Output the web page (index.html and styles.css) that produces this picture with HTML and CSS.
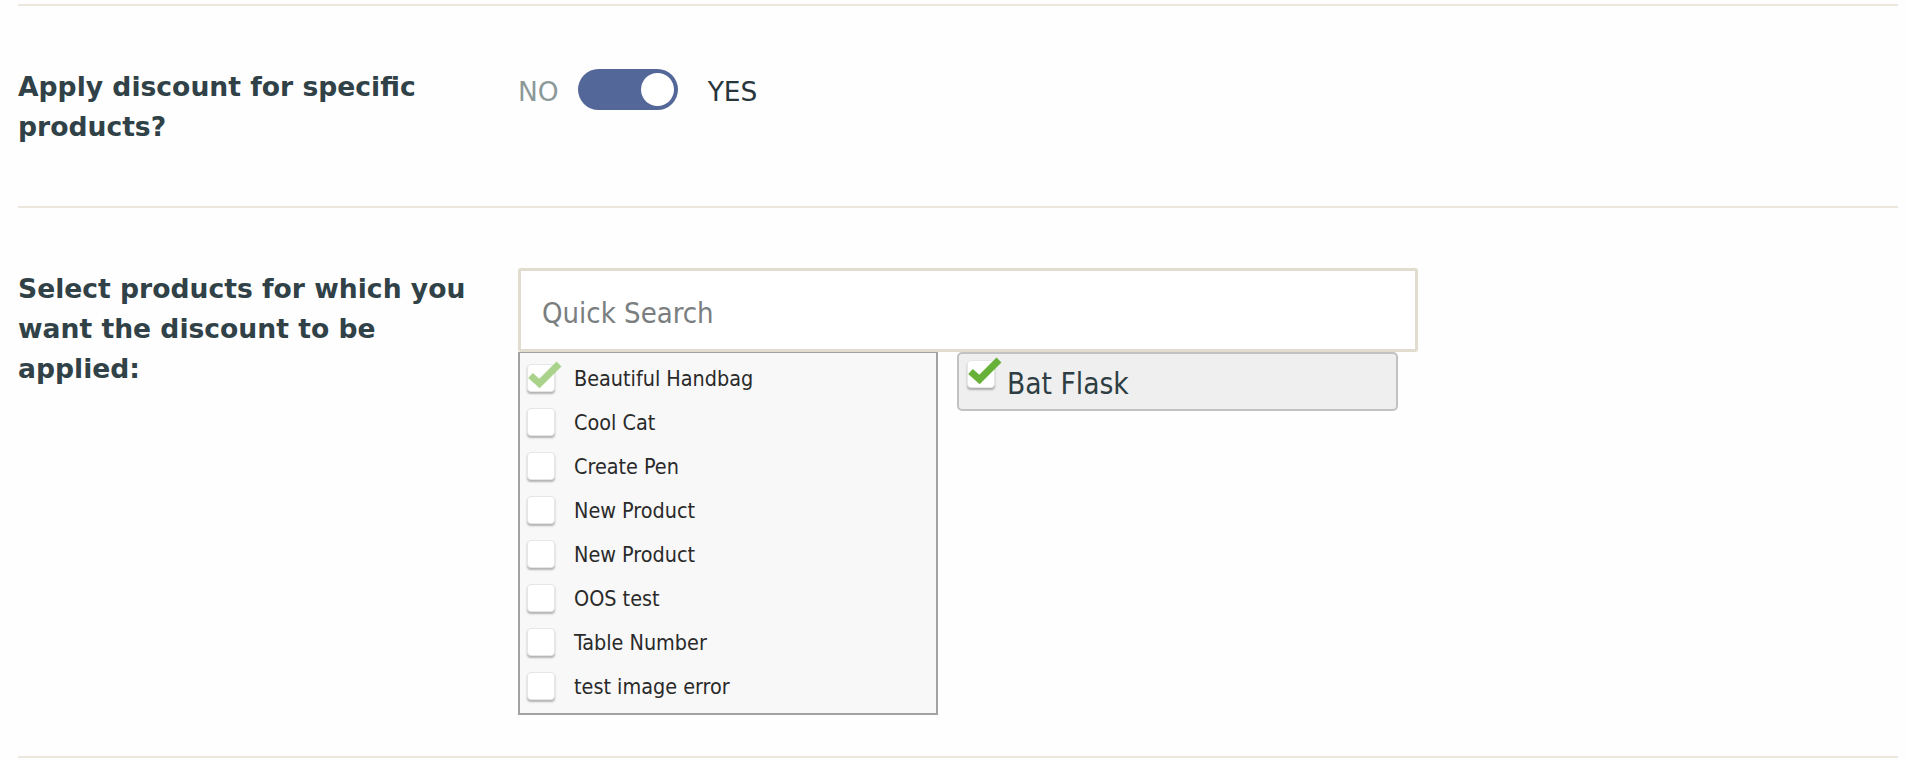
FILE: index.html
```html
<!DOCTYPE html>
<html lang="en">
<head>
<meta charset="utf-8">
<title>Discount products</title>
<link rel="stylesheet" href="styles.css">
</head>
<body>
<div class="form">
  <div class="row row-toggle">
    <div class="label">Apply discount for specific products?</div>
    <div class="control toggle-wrap">
      <span class="opt opt-off">NO</span>
      <span class="switch"><span class="knob"></span></span>
      <span class="opt opt-on">YES</span>
    </div>
  </div>
  <div class="row row-products">
    <div class="label label-products">Select products for which you want the discount to be applied:</div>
    <div class="control control-products">
      <input class="search" type="text" placeholder="Quick Search">
      <div class="picker">
        <ul class="list">
          <li class="item">
            <span class="cb"><svg class="check check-light" viewBox="0 0 34 28"><path d="M2.5 14.5 L11.5 22.5 L31 3"/></svg></span>
            <span class="name">Beautiful Handbag</span>
          </li>
          <li class="item"><span class="cb"></span><span class="name">Cool Cat</span></li>
          <li class="item"><span class="cb"></span><span class="name">Create Pen</span></li>
          <li class="item"><span class="cb"></span><span class="name">New Product</span></li>
          <li class="item"><span class="cb"></span><span class="name">New Product</span></li>
          <li class="item"><span class="cb"></span><span class="name">OOS test</span></li>
          <li class="item"><span class="cb"></span><span class="name">Table Number</span></li>
          <li class="item"><span class="cb"></span><span class="name">test image error</span></li>
        </ul>
        <div class="selected">
          <div class="chip">
            <span class="cb cb-chip"><svg class="check check-strong" viewBox="0 0 34 28"><path d="M2.5 14.5 L11.5 22.5 L31 3"/></svg></span>
            <span class="chip-name">Bat Flask</span>
          </div>
        </div>
      </div>
    </div>
  </div>
</div>
</body>
</html>
```

FILE: styles.css
```css
* {
  box-sizing: border-box;
}

html, body {
  margin: 0;
  padding: 0;
  background: #fefefe;
}

body {
  padding-top: 4px;
  font-family: "DejaVu Sans Condensed", "DejaVu Sans", sans-serif;
  font-stretch: condensed;
  color: #2e3f44;
}

.form {
  margin: 0 8px 0 18px;
}

.row {
  display: flex;
  align-items: flex-start;
  border-top: 2px solid #ece7dc;
}

.row-toggle {
  padding: 61px 0 59px;
}

.row-products {
  padding: 60px 0 41px;
  border-bottom: 2px solid #ece7dc;
}

.label {
  flex: 0 0 500px;
  padding-right: 30px;
  font-family: "DejaVu Sans", sans-serif;
  font-stretch: normal;
  font-size: 26.6px;
  line-height: 40px;
  font-weight: bold;
  color: #304247;
}

.label-products {
  padding-top: 1px;
}

.control {
  flex: 1 1 auto;
}

.toggle-wrap {
  display: flex;
  align-items: center;
  height: 45px;
}

.opt {
  font-family: "DejaVu Sans", sans-serif;
  font-stretch: normal;
  font-size: 26.5px;
  line-height: 30px;
  padding-top: 5px;
}

.opt-off {
  color: #8c9999;
  margin-right: 19px;
}

.opt-on {
  color: #27363b;
  margin-left: 30px;
}

.switch {
  position: relative;
  display: block;
  width: 100px;
  height: 41px;
  border-radius: 21px;
  background: #546799;
}

.knob {
  position: absolute;
  top: 4px;
  right: 4px;
  width: 33px;
  height: 33px;
  border-radius: 50%;
  background: #ffffff;
}

.search {
  display: block;
  width: 900px;
  height: 84px;
  margin: 0;
  border: 3px solid #e2dccf;
  border-radius: 3px;
  padding: 5px 0 0 21px;
  background: #ffffff;
  font-family: "DejaVu Sans Condensed", "DejaVu Sans", sans-serif;
  font-stretch: condensed;
  font-size: 29px;
  color: #333;
  outline: none;
}

.search::placeholder {
  color: #7a7e7f;
}

.picker {
  display: flex;
  align-items: flex-start;
  gap: 19px;
}

.list {
  list-style: none;
  margin: 0;
  width: 420px;
  padding: 3px 0 5px;
  border: 2px solid #a2a2a2;
  border-top-width: 1px;
  background: #f8f8f8;
}

.item {
  display: flex;
  align-items: center;
  height: 44px;
  padding-left: 7px;
}

.cb {
  position: relative;
  flex: 0 0 28px;
  width: 28px;
  height: 28px;
  background: #ffffff;
  border: 1px solid #e6e6e6;
  border-radius: 4px;
  box-shadow: 0 2px 2px rgba(0, 0, 0, 0.28);
}

.name {
  margin-left: 19px;
  font-size: 21.4px;
  line-height: 28px;
  padding-top: 2px;
  color: #2a2a2a;
}

.check {
  position: absolute;
  left: 0;
  top: -4px;
  width: 34px;
  height: 28px;
  overflow: visible;
}

.check path {
  fill: none;
  stroke-width: 7px;
  stroke-linecap: butt;
  stroke-linejoin: miter;
}

.check-light path {
  stroke: #a9d38a;
}

.check-strong path {
  stroke: #67b139;
}

.chip {
  display: flex;
  align-items: flex-start;
  width: 441px;
  height: 59px;
  margin-top: 0;
  padding: 6px 0 0 8px;
  background: #efefef;
  border: 2px solid #c2c2c2;
  border-radius: 5px;
}

.chip-name {
  margin-left: 12px;
  margin-top: 6px;
  font-size: 29.6px;
  line-height: 36px;
  color: #2e3e43;
}
```
